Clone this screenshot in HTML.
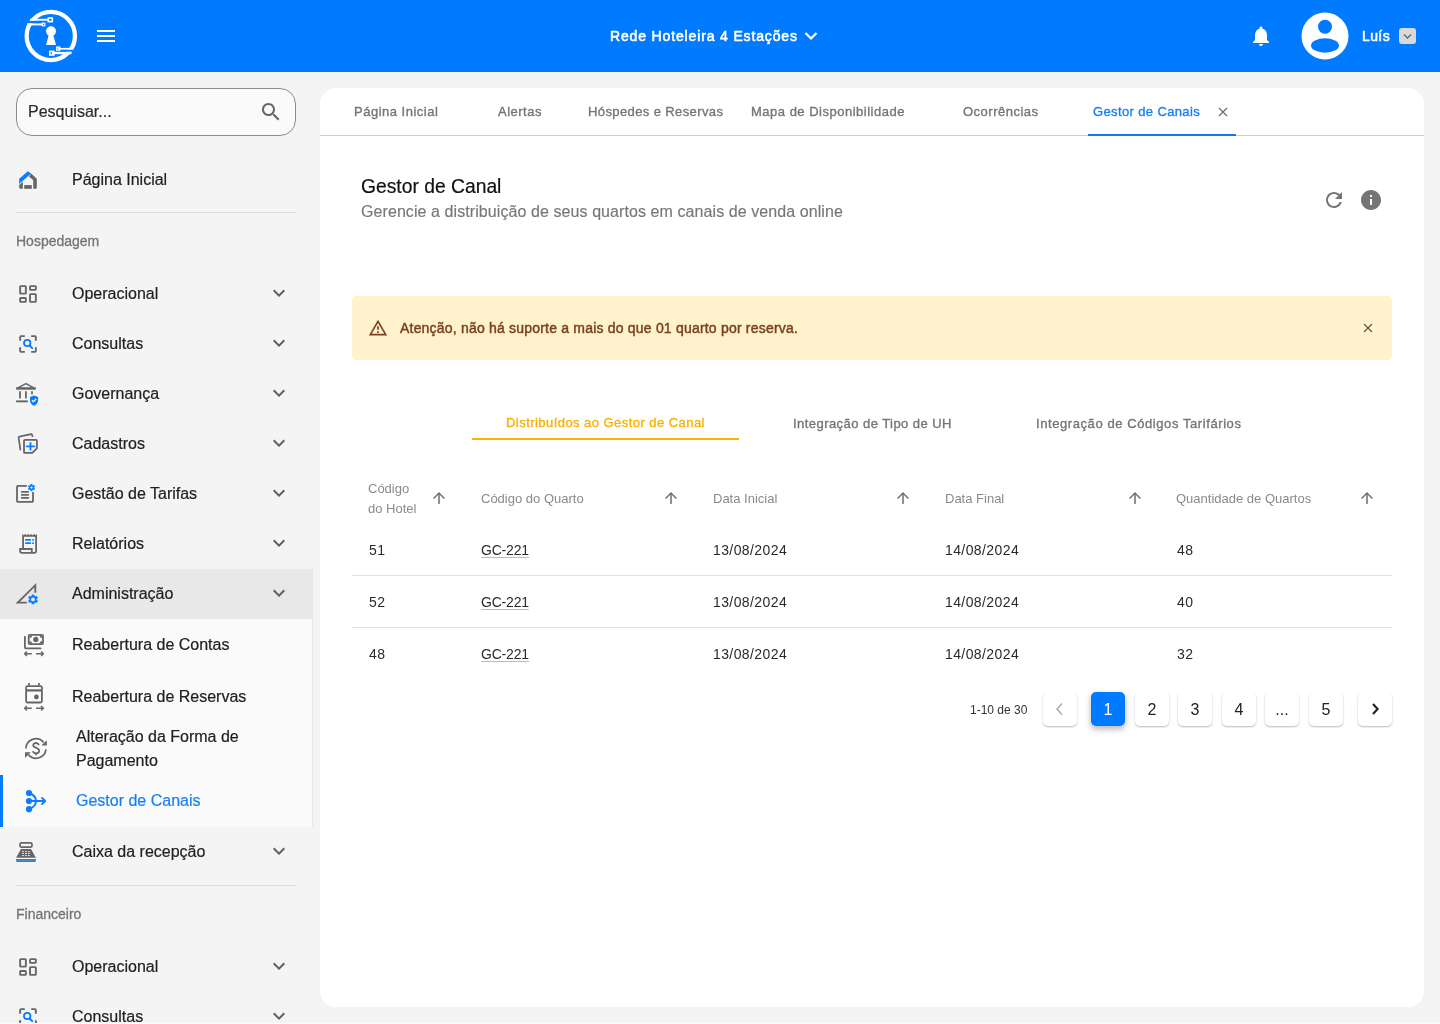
<!DOCTYPE html>
<html><head><meta charset="utf-8">
<style>
*{box-sizing:border-box;margin:0;padding:0}
html,body{width:1440px;height:1024px;overflow:hidden;background:#f4f4f4;font-family:"Liberation Sans",sans-serif;color:#212121}
.abs{position:absolute}
svg{display:block}
#hdr{position:absolute;left:0;top:0;width:1440px;height:72px;background:#007bff}
#side{position:absolute;left:0;top:72px;width:320px;height:952px;background:#f4f4f4;overflow:hidden}
.t{will-change:transform;position:absolute;white-space:nowrap;line-height:20px}
.mi{-webkit-text-stroke:0.2px currentColor;will-change:transform;position:absolute;left:72px;font-size:16px;color:#212121;white-space:nowrap;line-height:20px}
.ic{position:absolute}
.chev{position:absolute;left:267px}
.div{position:absolute;left:16px;width:280px;height:1px;background:#dcdcdc}
.sec{will-change:transform;position:absolute;left:16px;font-size:14px;color:#757575;line-height:20px;-webkit-text-stroke:0.3px #757575}
#card{position:absolute;left:320px;top:88px;width:1104px;height:919px;background:#fff;border-radius:16px}
.tab{font-size:13px;color:#757575;letter-spacing:0.5px;-webkit-text-stroke:0.35px currentColor}
.itab{font-size:13px;color:#757575;letter-spacing:0.45px;-webkit-text-stroke:0.35px currentColor}
.th{font-size:13px;color:#8a8a8a}
.td{font-size:14px;color:#2a2a2a;letter-spacing:0.4px}
.pg{will-change:transform;position:absolute;top:692px;width:34px;height:34px;background:#fff;border-radius:5px;box-shadow:0 1px 2px rgba(0,0,0,0.28);font-size:16px;color:#222;text-align:center;line-height:36px}
.pg.act{background:#007bff;color:#fff;box-shadow:0 3px 6px rgba(0,0,0,0.3)}
</style></head>
<body>
<div id="hdr">
  <!-- logo -->
  <svg class="abs" style="left:0;top:0" width="130" height="72" viewBox="0 0 130 72">
    <circle cx="50.8" cy="36" r="24.15" fill="none" stroke="#fff" stroke-width="4.3"/>
    <rect x="20" y="20.7" width="20" height="2.7" fill="#007bff"/>
    <rect x="60" y="49.5" width="22" height="2.3" fill="#007bff"/>
    <rect x="30" y="18.8" width="19" height="1.9" fill="#fff"/>
    <rect x="27" y="23.4" width="16" height="2" fill="#fff"/>
    <rect x="58" y="47.9" width="15.5" height="1.7" fill="#fff"/>
    <rect x="52" y="51.8" width="19.5" height="2.4" fill="#fff"/>
    <rect x="48.3" y="18" width="4" height="3.6" fill="none" stroke="#fff" stroke-width="1.6"/>
    <rect x="42.4" y="23.2" width="2.4" height="2.6" fill="none" stroke="#fff" stroke-width="1.2"/>
    <rect x="56.7" y="47.1" width="3" height="3" fill="none" stroke="#fff" stroke-width="1.3"/>
    <rect x="49.8" y="51.4" width="4" height="3.6" fill="none" stroke="#fff" stroke-width="1.6"/>
    <circle cx="51" cy="31.2" r="5" fill="#fff"/>
    <path d="M49 34 L53 34 L56 45 L46 45 Z" fill="#fff"/>
  </svg>
  <svg class="abs" style="left:97px;top:30px" width="18" height="12" viewBox="0 0 18 12"><rect x="0" y="0" width="18" height="2" fill="#fff"/><rect x="0" y="5" width="18" height="2" fill="#fff"/><rect x="0" y="10" width="18" height="2" fill="#fff"/></svg>
  <div class="t" style="left:610px;top:26px;font-size:14px;color:#fff;letter-spacing:0.85px;-webkit-text-stroke:0.55px #fff">Rede Hoteleira 4 Estações</div>
  <svg class="abs" style="left:799px;top:24px" width="24" height="24" viewBox="0 0 24 24"><path d="M6.5 9 L12 14.5 L17.5 9" fill="none" stroke="#fff" stroke-width="2.2"/></svg>
  <svg class="abs" style="left:1249px;top:24px" width="24" height="24" viewBox="0 0 24 24"><path fill="#fff" d="M12 22c1.1 0 2-.9 2-2h-4c0 1.1.89 2 2 2zm6-6v-5c0-3.07-1.64-5.64-4.5-6.32V4c0-.83-.67-1.5-1.5-1.5s-1.5.67-1.5 1.5v.68C7.63 5.36 6 7.92 6 11v5l-2 2v1h16v-1l-2-2z"/></svg>
  <svg class="abs" style="left:1301px;top:12px" width="48" height="48" viewBox="0 0 48 48"><circle cx="24" cy="24" r="23.5" fill="#fff"/><circle cx="24" cy="14.8" r="7" fill="#007bff"/><ellipse cx="24" cy="33.5" rx="14" ry="7.2" fill="#007bff"/></svg>
  <div class="t" style="left:1361.5px;top:26px;font-size:14px;color:#fff;letter-spacing:0.4px;-webkit-text-stroke:0.55px #fff">Luís</div>
  <div class="abs" style="left:1399px;top:28px;width:17px;height:16px;background:#d9d9d9;border-radius:3px"></div>
  <svg class="abs" style="left:1401px;top:30px" width="13" height="12" viewBox="0 0 13 12"><path d="M3 4.5 L6.5 8 L10 4.5" fill="none" stroke="#666" stroke-width="1.3"/></svg>
</div>

<div id="side">
<div class="abs" style="left:16px;top:16px;width:280px;height:48px;border:1px solid #8c8c8c;border-radius:16px;background:#fafafa"></div>
<div class="t" style="left:28px;top:30px;font-size:16px;color:#2b2b2b;-webkit-text-stroke:0.2px #2b2b2b">Pesquisar...</div>
<svg class="abs" style="left:259px;top:28px" width="24" height="24" viewBox="0 0 24 24"><path fill="#666" d="M15.5 14h-.79l-.28-.27C15.41 12.59 16 11.11 16 9.5 16 5.91 13.09 3 9.5 3S3 5.91 3 9.5 5.91 16 9.5 16c1.61 0 3.09-.59 4.23-1.57l.27.28v.79l5 4.99L20.49 19l-4.99-5zm-6 0C7.01 14 5 11.99 5 9.5S7.01 5 9.5 5 14 7.01 14 9.5 11.99 14 9.5 14z"/></svg>
<svg class="abs" style="left:12px;top:92px;overflow:visible" width="32" height="32" viewBox="0 0 32 32"><path fill="#0a7cff" d="M7.2 14.7L15.9 7.2L19.1 9.4L7.2 20Z"/><path fill="#666" d="M19.1 9.4L24.8 14.7V23.5Q24.8 24.7 23.6 24.7H21.25V16.3L17 12.5Z"/><path fill="#666" d="M7.2 20.9L10.8 17.8V24.7H8.4Q7.2 24.7 7.2 23.5Z"/><rect x="12.2" y="21.1" width="7.6" height="3.7" fill="#666"/></svg>
<div class="mi" style="top:98px">Página Inicial</div>
<div class="div" style="top:140px"></div>
<div class="sec" style="top:159px;font-weight:500">Hospedagem</div>
<div class="abs" style="left:0;top:497px;width:313px;height:50px;background:#e8e8e8"></div>
<div class="abs" style="left:0;top:547px;width:313px;height:208px;background:#fafafa"></div>
<div class="abs" style="left:312px;top:497px;width:1px;height:258px;background:#e6e6e6"></div>
<div class="abs" style="left:0;top:703px;width:3px;height:52px;background:#007bff"></div>
<div class="mi" style="top:212px">Operacional</div>
<svg class="abs" style="left:267px;top:209px" width="24" height="24" viewBox="0 0 24 24"><path fill="#5f5f5f" d="M16.59 8.59L12 13.17 7.41 8.59 6 10l6 6 6-6z"/></svg>
<div class="mi" style="top:262px">Consultas</div>
<svg class="abs" style="left:267px;top:259px" width="24" height="24" viewBox="0 0 24 24"><path fill="#5f5f5f" d="M16.59 8.59L12 13.17 7.41 8.59 6 10l6 6 6-6z"/></svg>
<div class="mi" style="top:312px">Governança</div>
<svg class="abs" style="left:267px;top:309px" width="24" height="24" viewBox="0 0 24 24"><path fill="#5f5f5f" d="M16.59 8.59L12 13.17 7.41 8.59 6 10l6 6 6-6z"/></svg>
<div class="mi" style="top:362px">Cadastros</div>
<svg class="abs" style="left:267px;top:359px" width="24" height="24" viewBox="0 0 24 24"><path fill="#5f5f5f" d="M16.59 8.59L12 13.17 7.41 8.59 6 10l6 6 6-6z"/></svg>
<div class="mi" style="top:412px">Gestão de Tarifas</div>
<svg class="abs" style="left:267px;top:409px" width="24" height="24" viewBox="0 0 24 24"><path fill="#5f5f5f" d="M16.59 8.59L12 13.17 7.41 8.59 6 10l6 6 6-6z"/></svg>
<div class="mi" style="top:462px">Relatórios</div>
<svg class="abs" style="left:267px;top:459px" width="24" height="24" viewBox="0 0 24 24"><path fill="#5f5f5f" d="M16.59 8.59L12 13.17 7.41 8.59 6 10l6 6 6-6z"/></svg>
<div class="mi" style="top:512px">Administração</div>
<svg class="abs" style="left:267px;top:509px" width="24" height="24" viewBox="0 0 24 24"><path fill="#5f5f5f" d="M16.59 8.59L12 13.17 7.41 8.59 6 10l6 6 6-6z"/></svg>
<svg class="abs" style="left:12px;top:206px;overflow:visible" width="32" height="32" viewBox="0 0 32 32"><g fill="none" stroke="#666" stroke-width="1.9"><rect x="8.15" y="8.15" width="5.7" height="7.5" rx="0.6"/><rect x="18.05" y="8.15" width="5.8" height="3.7" rx="0.6"/><rect x="8.15" y="19.95" width="5.7" height="3.9" rx="0.6"/><rect x="18.05" y="16.15" width="5.8" height="7.7" rx="0.6"/></g></svg>
<svg class="abs" style="left:12px;top:256px;overflow:visible" width="32" height="32" viewBox="0 0 32 32"><g fill="none" stroke="#666" stroke-width="1.9" stroke-linejoin="round"><path d="M8.15 12.8V9.2Q8.15 8.15 9.2 8.15H12.8"/><path d="M19.2 8.15H22.8Q23.85 8.15 23.85 9.2V12.8"/><path d="M8.15 19.2V22.8Q8.15 23.85 9.2 23.85H12.8"/><path d="M19.2 23.85H22.8Q23.85 23.85 23.85 22.8V19.2"/></g><circle cx="15.2" cy="15" r="3.2" fill="none" stroke="#0a7cff" stroke-width="1.8"/><path d="M17.6 17.5L20.2 20.1" stroke="#0a7cff" stroke-width="2" stroke-linecap="round"/></svg>
<svg class="abs" style="left:10px;top:304px;overflow:visible" width="32" height="32" viewBox="0 0 32 32"><path d="M7 12.4L15.9 7.6L24.8 12.4Z" fill="none" stroke="#666" stroke-width="1.6" stroke-linejoin="round"/><rect x="6.1" y="11.4" width="19.8" height="2.2" fill="#666"/><g stroke="#666" stroke-width="1.8" stroke-linecap="round"><path d="M10 16V21.7"/><path d="M15.9 16V21.7"/><path d="M22 16V17.6"/></g><rect x="6.1" y="24.4" width="11.7" height="1.9" fill="#666"/><path d="M24 19.4L28.1 21V24.5C28.1 27 26.3 29.1 24 29.7C21.8 29.1 20 27 20 24.5V21Z" fill="#0a7cff"/><path d="M21.9 24.3L23.4 25.7L26.1 23" fill="none" stroke="#fff" stroke-width="1.2"/></svg>
<svg class="abs" style="left:12px;top:356px;overflow:visible" width="32" height="32" viewBox="0 0 32 32"><path d="M8.4 21.6L6.6 9.6Q6.5 8.8 7.3 8.7L19 6.2Q19.6 6.1 19.9 6.6L20.5 8.2" fill="none" stroke="#666" stroke-width="1.7" stroke-linecap="round"/><path d="M12 12.9Q12 11.9 13 11.9H23.9Q24.9 11.9 24.9 12.9V20.3L20.3 24.9H13Q12 24.9 12 23.9Z" fill="none" stroke="#666" stroke-width="1.8"/><path d="M14.6 18.3H22.4M18.5 14.9V21.8" stroke="#0a7cff" stroke-width="1.8" stroke-linecap="round"/></svg>
<svg class="abs" style="left:10px;top:404px;overflow:visible" width="32" height="32" viewBox="0 0 32 32"><path d="M16.8 9.9H8Q7 9.9 7 10.9V24.9Q7 25.9 8 25.9H22Q23 25.9 23 24.9V16.1" fill="none" stroke="#666" stroke-width="1.8"/><g stroke="#666" stroke-width="1.7"><path d="M11.1 15.9H18.9M11.1 18.9H18.9M11.1 21.9H18.9"/></g><g transform="translate(21.5 11.6)"><path fill="#0a7cff" fill-rule="evenodd" d="M-0.88 -3.59 L0.88 -3.59 L1.09 -2.43 L1.56 -2.16 L2.67 -2.56 L3.55 -1.04 L2.65 -0.28 L2.65 0.28 L3.55 1.04 L2.67 2.56 L1.56 2.16 L1.09 2.43 L0.88 3.59 L-0.88 3.59 L-1.09 2.43 L-1.56 2.16 L-2.67 2.56 L-3.55 1.04 L-2.65 0.28 L-2.65 -0.28 L-3.55 -1.04 L-2.67 -2.56 L-1.56 -2.16 L-1.09 -2.43Z M1.15 0 A1.15 1.15 0 1 0 -1.15 0 A1.15 1.15 0 1 0 1.15 0Z"/></g></svg>
<svg class="abs" style="left:12px;top:456px;overflow:visible" width="32" height="32" viewBox="0 0 32 32"><path d="M10.2 20.5V5.9L11.7 7.3L13.2 5.9L14.7 7.3L16.2 5.9L17.7 7.3L19.2 5.9L20.7 7.3L22.2 5.9L23.7 7.3L25 5.9V8.7H10.2Z" fill="#666"/><path d="M11.1 20.5V8M24.1 8V23Q24.1 24.9 22.2 24.9H10Q8.1 24.9 8.1 23V21H19.8V24.9" fill="none" stroke="#666" stroke-width="1.8"/><g fill="#0a7cff"><rect x="13.1" y="11" width="5.9" height="1.8" rx="0.5"/><rect x="13.1" y="14.2" width="5.9" height="1.8" rx="0.5"/><rect x="20.1" y="11" width="1.8" height="1.8" rx="0.5"/><rect x="20.1" y="14.2" width="1.8" height="1.8" rx="0.5"/></g></svg>
<svg class="abs" style="left:10px;top:504px;overflow:visible" width="32" height="32" viewBox="0 0 32 32"><path d="M25.3 16.7V9.2L7.8 26.6H16.8" fill="none" stroke="#666" stroke-width="1.9"/><g transform="translate(23 23.4)"><path fill="#0a7cff" fill-rule="evenodd" d="M-1.21 -4.95 L1.21 -4.95 L1.50 -3.35 L2.16 -2.97 L3.68 -3.53 L4.90 -1.43 L3.65 -0.38 L3.65 0.38 L4.90 1.43 L3.68 3.53 L2.16 2.97 L1.50 3.35 L1.21 4.95 L-1.21 4.95 L-1.50 3.35 L-2.16 2.97 L-3.68 3.53 L-4.90 1.43 L-3.65 0.38 L-3.65 -0.38 L-4.90 -1.43 L-3.68 -3.53 L-2.16 -2.97 L-1.50 -3.35Z M1.9 0 A1.9 1.9 0 1 0 -1.9 0 A1.9 1.9 0 1 0 1.9 0Z"/></g></svg>
<div class="mi" style="left:72px;top:563px">Reabertura de Contas</div>
<div class="mi" style="left:72px;top:615px">Reabertura de Reservas</div>
<div class="mi" style="left:76px;top:653px;line-height:24px;white-space:normal;width:200px">Alteração da Forma de<br>Pagamento</div>
<div class="mi" style="left:76px;top:719px;color:#1a7ef5">Gestor de Canais</div>
<svg class="abs" style="left:18px;top:556px;overflow:visible" width="32" height="32" viewBox="0 0 32 32"><rect x="10.7" y="6.8" width="14.3" height="9.3" rx="1" fill="none" stroke="#666" stroke-width="1.8"/><circle cx="17.8" cy="11.4" r="2.6" fill="#666"/><path d="M11.5 7.5h2.5a2.5 2.5 0 0 1-2.5 2.5z M24.2 7.5h-2.5a2.5 2.5 0 0 0 2.5 2.5z M11.5 15.4h2.5a2.5 2.5 0 0 0-2.5-2.5z M24.2 15.4h-2.5a2.5 2.5 0 0 1 2.5-2.5z" fill="#666"/><path d="M6.9 8.8V19.6Q6.9 20.4 7.7 20.4H22.6" fill="none" stroke="#666" stroke-width="1.8" stroke-linecap="round"/><path d="M13.8 25.7H6.6M8.9 23.4L6.6 25.7L8.9 28.0M18.1 25.7H25.4M23.1 23.4L25.4 25.7L23.1 28.0" fill="none" stroke="#666" stroke-width="1.4" stroke-linejoin="round"/></svg>
<svg class="abs" style="left:18px;top:608px;overflow:visible" width="32" height="32" viewBox="0 0 32 32"><rect x="8.1" y="6.1" width="15.8" height="16.4" rx="1.5" fill="none" stroke="#666" stroke-width="1.8"/><rect x="8.1" y="9.3" width="15.8" height="2.2" fill="#666"/><path d="M11 3V5.5M21 3V5.5" stroke="#666" stroke-width="1.8"/><circle cx="18.4" cy="17" r="2.4" fill="#666"/><path d="M13.8 28.3H6.6M8.9 26.0L6.6 28.3L8.9 30.6M18.1 28.3H25.4M23.1 26.0L25.4 28.3L23.1 30.6" fill="none" stroke="#666" stroke-width="1.4" stroke-linejoin="round"/></svg>
<svg class="abs" style="left:20px;top:660px;overflow:visible" width="32" height="32" viewBox="0 0 32 32"><path d="M5.9 16.5A10 10 0 0 1 23.6 10.4" fill="none" stroke="#666" stroke-width="1.7"/><path d="M26.9 8.2V13.6H21.3Z" fill="#666"/><path d="M26 17.3A10 10 0 0 1 8.4 22.6" fill="none" stroke="#666" stroke-width="1.7"/><path d="M5 20.3H10.8L5 26.1Z" fill="#666"/><path d="M18.8 13.2C18.5 11.8 17.4 11.1 16 11.1C14.3 11.1 13.2 12 13.2 13.3C13.2 16.4 19.2 15.2 19.2 18.8C19.2 20.2 18 21.3 16 21.3C14.3 21.3 13.1 20.4 12.9 19.2M16 10V11.2M16 21.2V23.3" fill="none" stroke="#666" stroke-width="1.7"/></svg>
<svg class="abs" style="left:20px;top:712px;overflow:visible" width="32" height="32" viewBox="0 0 32 32"><g fill="#0a7cff"><circle cx="9" cy="9" r="3.1"/><circle cx="9" cy="17" r="3.1"/><circle cx="9" cy="25.2" r="3.1"/></g><path d="M9 9Q16 11.5 16 17Q16 22.5 9 25.2M9 17H25" fill="none" stroke="#0a7cff" stroke-width="1.9"/><path d="M22 13.9L25.2 17L22 20.1" fill="none" stroke="#0a7cff" stroke-width="1.9" stroke-linecap="round" stroke-linejoin="round"/></svg>
<div class="mi" style="top:770px">Caixa da recepção</div>
<svg class="abs" style="left:267px;top:767px" width="24" height="24" viewBox="0 0 24 24"><path fill="#5f5f5f" d="M16.59 8.59L12 13.17 7.41 8.59 6 10l6 6 6-6z"/></svg>
<svg class="abs" style="left:10px;top:764px;overflow:visible" width="32" height="32" viewBox="0 0 32 32"><rect x="10.05" y="6.85" width="11.9" height="4.2" rx="1.4" fill="none" stroke="#666" stroke-width="1.7"/><path d="M11 13H21L25.9 21.8H6.1Z" fill="#666"/><g fill="#f4f4f4"><rect x="12.2" y="15.2" width="1.7" height="0.9"/><rect x="15.1" y="15.2" width="1.7" height="0.9"/><rect x="18" y="15.2" width="1.7" height="0.9"/><rect x="12.2" y="17.1" width="1.7" height="0.9"/><rect x="15.1" y="17.1" width="1.7" height="0.9"/><rect x="18" y="17.1" width="1.7" height="0.9"/><rect x="12.2" y="19" width="1.7" height="0.9"/><rect x="15.1" y="19" width="1.7" height="0.9"/><rect x="18" y="19" width="1.7" height="0.9"/></g><rect x="6.1" y="23.1" width="19.8" height="1.6" fill="#5a6570"/><path d="M6.1 24.6H25.9V25Q25.9 26 24.9 26H7.1Q6.1 26 6.1 25Z" fill="#1883f0"/></svg>
<div class="div" style="top:813px"></div>
<div class="sec" style="top:832px;font-weight:500">Financeiro</div>
<div class="mi" style="top:885px">Operacional</div>
<svg class="abs" style="left:267px;top:882px" width="24" height="24" viewBox="0 0 24 24"><path fill="#5f5f5f" d="M16.59 8.59L12 13.17 7.41 8.59 6 10l6 6 6-6z"/></svg>
<div class="mi" style="top:935px">Consultas</div>
<svg class="abs" style="left:267px;top:932px" width="24" height="24" viewBox="0 0 24 24"><path fill="#5f5f5f" d="M16.59 8.59L12 13.17 7.41 8.59 6 10l6 6 6-6z"/></svg>
<svg class="abs" style="left:12px;top:879px;overflow:visible" width="32" height="32" viewBox="0 0 32 32"><g fill="none" stroke="#666" stroke-width="1.9"><rect x="8.15" y="8.15" width="5.7" height="7.5" rx="0.6"/><rect x="18.05" y="8.15" width="5.8" height="3.7" rx="0.6"/><rect x="8.15" y="19.95" width="5.7" height="3.9" rx="0.6"/><rect x="18.05" y="16.15" width="5.8" height="7.7" rx="0.6"/></g></svg>
<svg class="abs" style="left:12px;top:929px;overflow:visible" width="32" height="32" viewBox="0 0 32 32"><g fill="none" stroke="#666" stroke-width="1.9" stroke-linejoin="round"><path d="M8.15 12.8V9.2Q8.15 8.15 9.2 8.15H12.8"/><path d="M19.2 8.15H22.8Q23.85 8.15 23.85 9.2V12.8"/><path d="M8.15 19.2V22.8Q8.15 23.85 9.2 23.85H12.8"/><path d="M19.2 23.85H22.8Q23.85 23.85 23.85 22.8V19.2"/></g><circle cx="15.2" cy="15" r="3.2" fill="none" stroke="#0a7cff" stroke-width="1.8"/><path d="M17.6 17.5L20.2 20.1" stroke="#0a7cff" stroke-width="2" stroke-linecap="round"/></svg>
</div>

<div id="card"></div>
<div class="abs" style="left:320px;top:135px;width:1104px;height:1px;background:#cfcfcf"></div>
<div class="t tab" style="left:353.7px;top:101.8px">Página Inicial</div>
<div class="t tab" style="left:498px;top:101.8px">Alertas</div>
<div class="t tab" style="left:588px;top:101.8px;letter-spacing:0.39px">Hóspedes e Reservas</div>
<div class="t tab" style="left:751px;top:101.8px">Mapa de Disponibilidade</div>
<div class="t tab" style="left:963px;top:101.8px">Ocorrências</div>
<div class="t tab" style="left:1093px;top:101.8px;color:#1b7fef;letter-spacing:0.37px">Gestor de Canais</div>
<svg class="abs" style="left:1218px;top:107px" width="10" height="10" viewBox="0 0 10 10"><path d="M1 1L9 9M9 1L1 9" stroke="#6b6b6b" stroke-width="1.2"/></svg>
<div class="abs" style="left:1088px;top:133.5px;width:148px;height:2.5px;background:#0a7bf0"></div>
<div class="t" style="left:360.5px;top:177.1px;font-size:19.3px;color:#111;-webkit-text-stroke:0.2px #111">Gestor de Canal</div>
<div class="t" style="left:360.5px;top:202.16px;font-size:16px;color:#777;letter-spacing:0.08px;-webkit-text-stroke:0.15px #777">Gerencie a distribuição de seus quartos em canais de venda online</div>
<svg class="abs" style="left:1322px;top:188px" width="24" height="24" viewBox="0 0 24 24"><path fill="#757575" d="M17.65 6.35C16.2 4.9 14.21 4 12 4c-4.42 0-7.99 3.58-7.99 8s3.57 8 7.99 8c3.73 0 6.84-2.55 7.73-6h-2.08c-.82 2.33-3.04 4-5.65 4-3.31 0-6-2.69-6-6s2.69-6 6-6c1.66 0 3.14.69 4.22 1.78L13 11h7V4l-2.35 2.35z"/></svg>
<svg class="abs" style="left:1359px;top:188px" width="24" height="24" viewBox="0 0 24 24"><path fill="#757575" d="M12 2C6.48 2 2 6.48 2 12s4.48 10 10 10 10-4.48 10-10S17.52 2 12 2zm1 15h-2v-6h2v6zm0-8h-2V7h2v2z"/></svg>
<div class="abs" style="left:352px;top:296px;width:1040px;height:64px;background:#fff2cc;border-radius:4px"></div>
<svg class="abs" style="left:368px;top:318px" width="20" height="20" viewBox="0 0 24 24"><path fill="#7a4020" d="M12 5.99L19.53 19H4.47L12 5.99M12 2L1 21h22L12 2zm1 14h-2v2h2v-2zm0-6h-2v4h2v-4z"/></svg>
<div class="t" style="left:400.4px;top:317.95px;font-size:14px;color:#7a4020;letter-spacing:0.2px;-webkit-text-stroke:0.45px #7a4020">Atenção, não há suporte a mais do que 01 quarto por reserva.</div>
<svg class="abs" style="left:1362px;top:322px" width="12" height="12" viewBox="0 0 12 12"><path d="M2 2L10 10M10 2L2 10" stroke="#5c5a4c" stroke-width="1.2"/></svg>
<div class="t itab" style="left:506.3px;top:412.5px;color:#f9b100">Distribuídos ao Gestor de Canal</div>
<div class="t itab" style="left:792.7px;top:413.5px">Integração de Tipo de UH</div>
<div class="t itab" style="letter-spacing:0.58px;left:1035.5px;top:413.5px">Integração de Códigos Tarifários</div>
<div class="abs" style="left:472px;top:438px;width:267px;height:2px;background:#fbb300"></div>
<div class="t th" style="left:367.8px;top:478.5px">Código<br>do Hotel</div>
<svg class="abs" style="left:430px;top:489px" width="18" height="18" viewBox="0 0 24 24"><path fill="#6f6f6f" d="M4 12l1.41 1.41L11 7.83V20h2V7.83l5.58 5.59L20 12l-8-8-8 8z"/></svg>
<div class="t th" style="left:481px;top:489.00px">Código do Quarto</div>
<svg class="abs" style="left:662px;top:489px" width="18" height="18" viewBox="0 0 24 24"><path fill="#6f6f6f" d="M4 12l1.41 1.41L11 7.83V20h2V7.83l5.58 5.59L20 12l-8-8-8 8z"/></svg>
<div class="t th" style="left:713px;top:489.00px">Data Inicial</div>
<svg class="abs" style="left:894px;top:489px" width="18" height="18" viewBox="0 0 24 24"><path fill="#6f6f6f" d="M4 12l1.41 1.41L11 7.83V20h2V7.83l5.58 5.59L20 12l-8-8-8 8z"/></svg>
<div class="t th" style="left:944.5px;top:489.00px">Data Final</div>
<svg class="abs" style="left:1126px;top:489px" width="18" height="18" viewBox="0 0 24 24"><path fill="#6f6f6f" d="M4 12l1.41 1.41L11 7.83V20h2V7.83l5.58 5.59L20 12l-8-8-8 8z"/></svg>
<div class="t th" style="left:1176px;top:489.00px">Quantidade de Quartos</div>
<svg class="abs" style="left:1358px;top:489px" width="18" height="18" viewBox="0 0 24 24"><path fill="#6f6f6f" d="M4 12l1.41 1.41L11 7.83V20h2V7.83l5.58 5.59L20 12l-8-8-8 8z"/></svg>
<div class="t td" style="left:368.5px;top:540.15px">51</div>
<div class="t td" style="left:481px;top:540.15px;text-decoration:underline;letter-spacing:-0.2px;text-decoration-color:#bbb;text-underline-offset:2px">GC-221</div>
<div class="t td" style="left:713px;top:540.15px">13/08/2024</div>
<div class="t td" style="left:944.8px;top:540.15px">14/08/2024</div>
<div class="t td" style="left:1176.5px;top:540.15px">48</div>
<div class="abs" style="left:352px;top:575px;width:1040px;height:1px;background:#e0e0e0"></div>
<div class="t td" style="left:368.5px;top:592.15px">52</div>
<div class="t td" style="left:481px;top:592.15px;text-decoration:underline;letter-spacing:-0.2px;text-decoration-color:#bbb;text-underline-offset:2px">GC-221</div>
<div class="t td" style="left:713px;top:592.15px">13/08/2024</div>
<div class="t td" style="left:944.8px;top:592.15px">14/08/2024</div>
<div class="t td" style="left:1176.5px;top:592.15px">40</div>
<div class="abs" style="left:352px;top:627px;width:1040px;height:1px;background:#e0e0e0"></div>
<div class="t td" style="left:368.5px;top:644.15px">48</div>
<div class="t td" style="left:481px;top:644.15px;text-decoration:underline;letter-spacing:-0.2px;text-decoration-color:#bbb;text-underline-offset:2px">GC-221</div>
<div class="t td" style="left:713px;top:644.15px">13/08/2024</div>
<div class="t td" style="left:944.8px;top:644.15px">14/08/2024</div>
<div class="t td" style="left:1176.5px;top:644.15px">32</div>
<div class="t" style="left:969.7px;top:699.84px;font-size:12px;color:#333;letter-spacing:0">1-10 de 30</div>
<div class="pg" style="left:1042.5px"><svg width="34" height="34" viewBox="0 0 34 34"><path d="M19 11.5L14 17L19 22.5" fill="none" stroke="#aaa" stroke-width="1.5"/></svg></div>
<div class="pg act" style="left:1091.0px">1</div>
<div class="pg" style="left:1134.6px">2</div>
<div class="pg" style="left:1178.2px">3</div>
<div class="pg" style="left:1221.8px">4</div>
<div class="pg" style="left:1265.4px">...</div>
<div class="pg" style="left:1309.0px">5</div>
<div class="pg" style="left:1357.8px"><svg width="34" height="34" viewBox="0 0 34 34"><path d="M15 12L19.6 17L15 22" fill="none" stroke="#222" stroke-width="2.1"/></svg></div>

<div class="abs" style="left:0;top:1023px;width:1440px;height:1px;background:#fbfbfb"></div>
</body></html>
